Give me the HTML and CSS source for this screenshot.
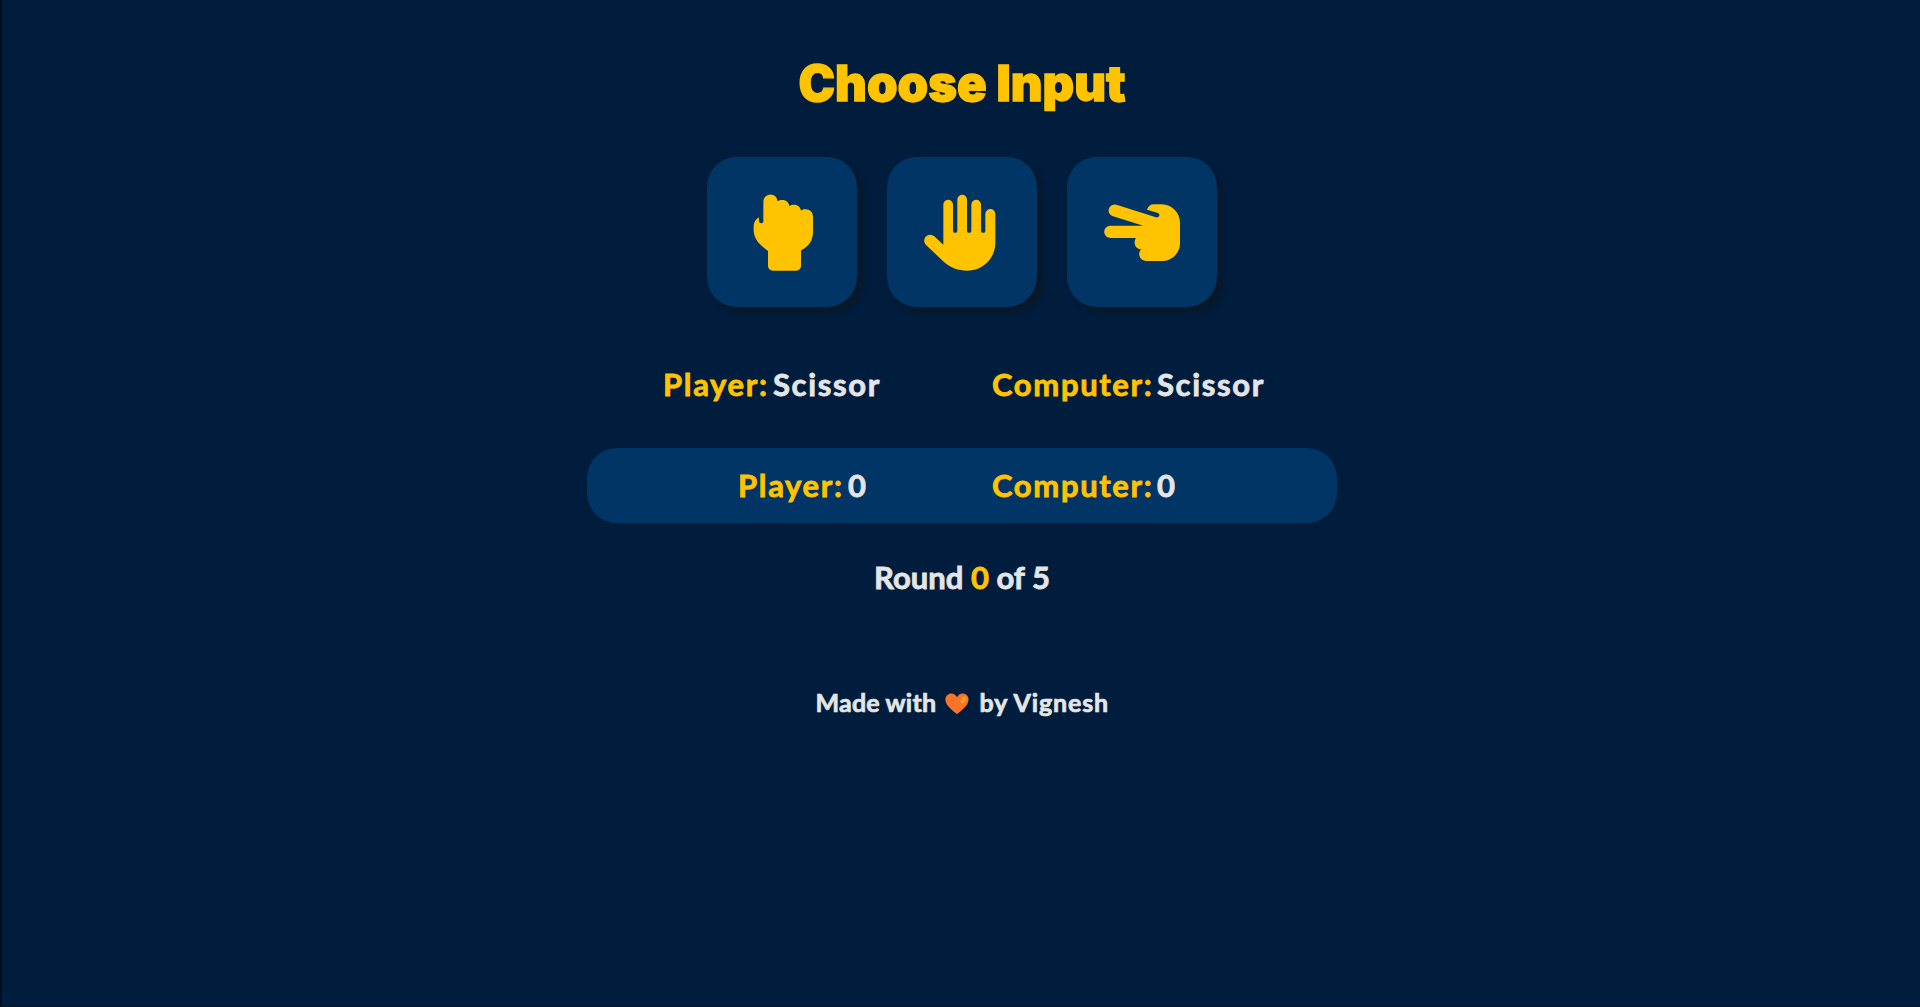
FILE: index.html
```html
<!DOCTYPE html>
<html lang="en">
<head>
<meta charset="utf-8">
<title>Rock Paper Scissor</title>
<link rel="stylesheet" href="styles.css">
</head>
<body>
<main class="game">
  <h1 class="title">Choose Input</h1>
  <div class="choices">
    <button class="choice" aria-label="Rock">
      <svg class="hand" viewBox="21 21 450 450"><path d="M190 156a21.500 21.500 0 0 1 43-2c3-3 8-4 14-4 12 0 20 8 21 18 4-3 8-4 14-4 12 0 20 8 21 18 3-3 8-4 14-4 12 0 22 9 22 22v47c0 24-14 45-36 54v47a14 14 0 0 1-14 14h-71a14 14 0 0 1-14-14v-45l-16-13c-18-14-27-32-27-50v-11c0-12 6-21 16-27v11q0 7 7 7t6-7z"/></svg>
    </button>
    <button class="choice" aria-label="Paper">
      <svg class="hand" viewBox="21 21 450 450"><path d="M190 284V164a14.500 14.500 0 0 1 29 0v78a6.500 6.500 0 0 0 13 0V149a14.500 14.500 0 0 1 29 0v93a6.500 6.500 0 0 0 13 0v-78a14.500 14.500 0 0 1 29 0v78a6.500 6.500 0 0 0 13 0v-50a15 15 0 0 1 30 0v86c0 47-37 84-84 84-27 0-51-9-70-26l-54-51a18 18 0 0 1 25-26z"/></svg>
    </button>
    <button class="choice" aria-label="Scissor">
      <svg class="hand" viewBox="21 21 450 450"><path d="M169 164l119 38c9 2 14-9 6-13l-33-10c3-10 11-16 20-16h24c31 0 55 25 55 55v62c0 30-24 53-54 53h-46c-22 0-29-24-16-35-19-1-25-21-16-34h-77a18 18 0 0 1 0-37h99l-91-28a18 18 0 0 1 10-35z"/></svg>
    </button>
  </div>
  <div class="row picks">
    <p class="side"><span class="label player">Player:</span> <span class="pick">Scissor</span></p>
    <p class="side"><span class="label computer">Computer:</span> <span class="pick">Scissor</span></p>
  </div>
  <div class="row scores">
    <p class="side"><span class="label player">Player:</span> <span class="num">0</span></p>
    <p class="side"><span class="label computer">Computer:</span> <span class="num">0</span></p>
  </div>
  <p class="round">Round <span class="num current">0</span> of 5</p>
  <footer class="credit">
    <span class="made">Made with</span>
    <svg class="heart" viewBox="0 0 24 22"><path fill="#fb7326" d="M12 21.300C9 18.500.4 13 .4 6.800.4 3 3.200.6 6.300.6 8.800.6 11 2 12 4.300 13 2 15.200.6 17.700.6c3.100 0 5.900 2.400 5.900 6.200 0 6.200-8.600 11.700-11.600 14.500z"/><ellipse cx="18.500" cy="7" rx="2.300" ry="3.700" fill="#ffa033" transform="rotate(28 18.500 7)"/></svg>
    <span class="author">by Vignesh</span>
  </footer>
</main>
</body>
</html>
```
FILE: styles.css
```css
* {
  box-sizing: border-box;
  margin: 0;
}

body {
  min-height: 100vh;
  background: #001d3d;
  color: #e5e5e5;
  border-left: 2px solid #000d1d;
  border-bottom: 2px solid #001731;
  font-family: Lato, "Open Sans", sans-serif;
  font-weight: 700;
  overflow: hidden;
}

.game {
  width: 752px;
  margin: 0 auto;
  padding: 50px 0 0 2px;
  display: flex;
  flex-direction: column;
  align-items: center;
}

.title {
  height: 107px;
  font-family: Inter, sans-serif;
  font-size: 49px;
  line-height: 68px;
  font-weight: 900;
  white-space: nowrap;
  color: #ffc300;
  -webkit-text-stroke: 1.3px #ffc300;
  stroke-linejoin: round;
}

.choices {
  display: flex;
  gap: 30px;
}

.choice {
  width: 150px;
  height: 150px;
  padding: 0;
  border: 0;
  border-radius: 30px;
  background: #003566;
  box-shadow: 6px 6px 5px rgba(10, 24, 38, 0.8);
}

.hand {
  display: block;
  width: 150px;
  height: 150px;
  fill: #ffc300;
}

.row {
  width: 750px;
  height: 75px;
  display: grid;
  align-items: center;
  font-size: 31px;
  line-height: 36px;
  letter-spacing: 1.65px;
  white-space: nowrap;
  -webkit-text-stroke: 0.8px currentColor;
}

.side {
  display: flex;
  gap: 6px;
}

.label {
  color: #ffc300;
}

.label.player {
  width: 104px;
}

.label.computer {
  width: 159px;
}

.picks {
  margin-top: 39px;
  padding-left: 76px;
  grid-template-columns: 329px 1fr;
}

.scores {
  margin-top: 27px;
  padding: 0 0 2px 151px;
  grid-template-columns: 254px 1fr;
  border-radius: 30px;
  background: #003566;
}

.round {
  margin-top: 36px;
  font-size: 31px;
  line-height: 36px;
  -webkit-text-stroke: 0.8px currentColor;
}

.current {
  color: #ffc300;
}

.credit {
  margin-top: 92px;
  display: flex;
  align-items: center;
  font-size: 25px;
  line-height: 30px;
  white-space: nowrap;
  -webkit-text-stroke: 0.7px currentColor;
}

.made {
  width: 120px;
  letter-spacing: 0.2px;
}

.heart {
  width: 24px;
  height: 22px;
  margin: 4px 11px 0 9px;
}

.author {
  width: 129px;
  letter-spacing: 0.85px;
}
```
